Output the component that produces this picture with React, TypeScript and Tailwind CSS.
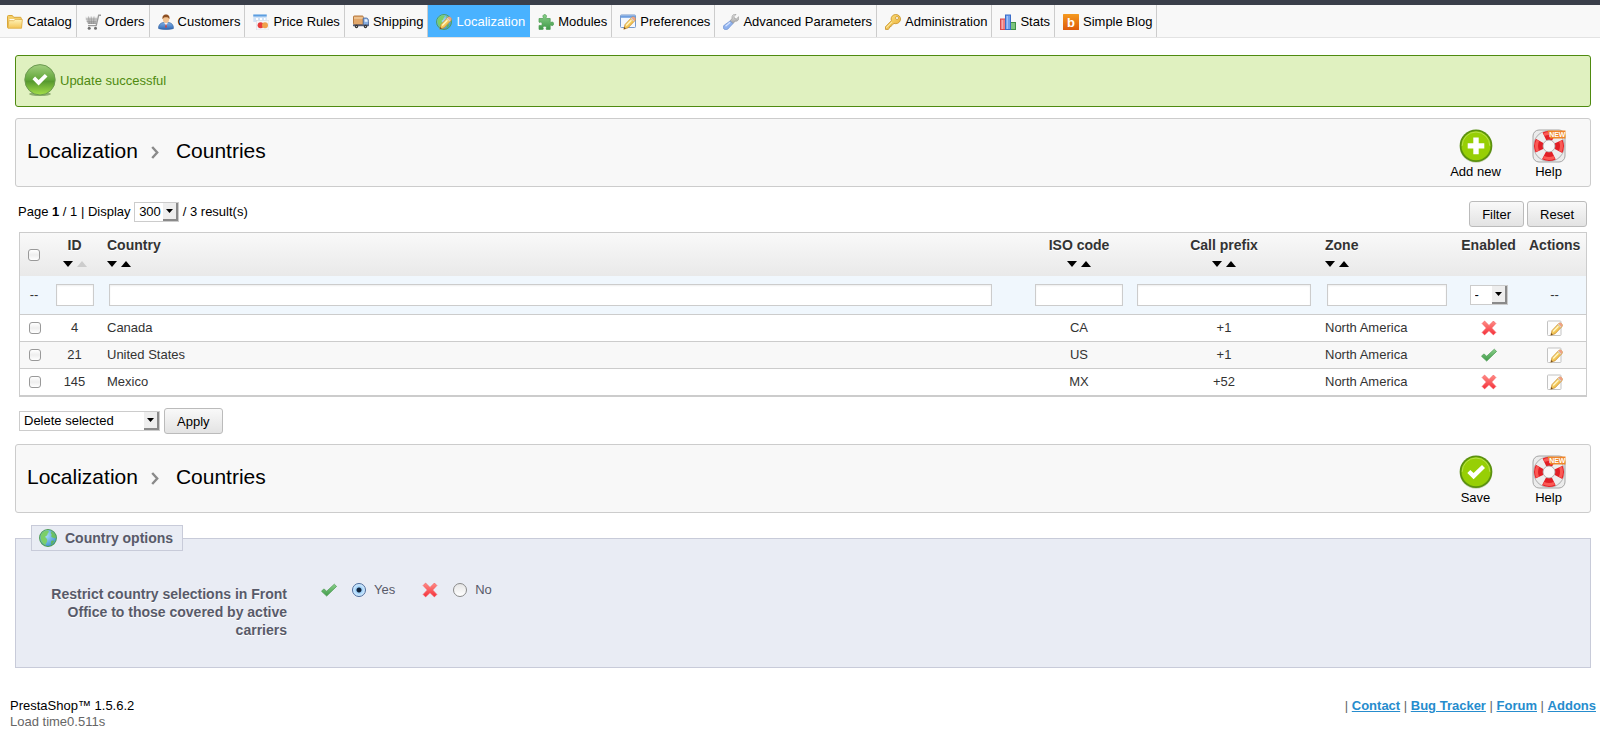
import clsx from 'clsx';
import { ReactNode } from 'react';

const Defs = () => (
  <svg className="absolute h-0 w-0" aria-hidden="true">
    <defs>
      <linearGradient id="folder" x1="0" y1="0" x2="0" y2="1">
        <stop offset="0" stopColor="#fff3b8" />
        <stop offset="1" stopColor="#f3c455" />
      </linearGradient>
      <linearGradient id="steel" x1="0" y1="0" x2="0" y2="1">
        <stop offset="0" stopColor="#f2f2f2" />
        <stop offset="1" stopColor="#9b9b9b" />
      </linearGradient>
      <linearGradient id="coat" x1="0" y1="0" x2="0" y2="1">
        <stop offset="0" stopColor="#7fb0e6" />
        <stop offset="1" stopColor="#2f68b4" />
      </linearGradient>
      <linearGradient id="gold" x1="0" y1="0" x2="1" y2="1">
        <stop offset="0" stopColor="#ffe98a" />
        <stop offset="1" stopColor="#e8a92e" />
      </linearGradient>
      <linearGradient id="leaf" x1="0" y1="0" x2="0" y2="1">
        <stop offset="0" stopColor="#8ad08a" />
        <stop offset="1" stopColor="#3f9a48" />
      </linearGradient>
      <linearGradient id="cherry" x1="0" y1="0" x2="0" y2="1">
        <stop offset="0" stopColor="#ff8d86" />
        <stop offset="1" stopColor="#f5303a" />
      </linearGradient>
      <linearGradient id="orange" x1="0" y1="0" x2="0" y2="1">
        <stop offset="0" stopColor="#f59a1f" />
        <stop offset="1" stopColor="#dd5a0c" />
      </linearGradient>
      <linearGradient id="success" x1="0" y1="0" x2="0" y2="1">
        <stop offset="0" stopColor="#a3d07f" />
        <stop offset="0.5" stopColor="#62a63a" />
        <stop offset="0.55" stopColor="#57992f" />
        <stop offset="1" stopColor="#a6e04a" />
      </linearGradient>
      <radialGradient id="globe" cx="0.4" cy="0.35" r="0.7">
        <stop offset="0" stopColor="#a9dcf5" />
        <stop offset="1" stopColor="#3d8fd0" />
      </radialGradient>
    </defs>
  </svg>
);

const Icon = ({ children }: { children: ReactNode }) => (
  <svg viewBox="0 0 16 16" className="size-4 shrink-0" aria-hidden="true">
    {children}
  </svg>
);

const Pencil = () => (
  <>
    <path d="M3.800 15.200l1.200-4.700 6.400-6.700c1-1 2.200-1 3.200 0s1 2.200 0 3.200l-6.500 6.800z" fill="url(#gold)" stroke="#c98a2b" strokeWidth=".7" />
    <path d="M11.800 3.500c1-.9 2-.8 2.900.1s.9 1.900 0 2.900l-.9.800-2.900-2.900z" fill="#efa184" />
    <path d="M10.700 4.600l2.900 2.900.7-.8-2.900-2.900z" fill="#d5d5d5" />
    <path d="M3.800 15.200l.6-2.100 1.500 1.500z" fill="#6b4a20" />
    <path d="M6.200 11.500l5.200-5.300" stroke="#fff7c6" strokeWidth="1.300" />
  </>
);

const CatalogIcon = () => (
  <Icon>
    <path d="M.5 2.500c0-.6.400-1 1-1h3.800l1.400 1.800h6.600c.6 0 1 .4 1 1v9.200H.5z" fill="#f5cf6a" stroke="#d9a638" />
    <path d="M2.500 5h9.500v3h-9.500z" fill="#fffdf0" />
    <path d="M1 14.300l.8-7.600h5l1.200-1.200h7.400l-.9 8.800z" fill="url(#folder)" stroke="#dfaf45" strokeWidth=".8" />
  </Icon>
);

const OrdersIcon = () => (
  <Icon>
    <path d="M0 2.500h12.500l-1.500 7.500H3z" fill="url(#steel)" />
    <path d="M.7 5h11.500M1.500 7.300h10M3.500 2.500l1 7.500M6.200 2.500l.3 7.500M9 2.500l-.5 7.500" stroke="#8d8d8d" strokeWidth=".6" />
    <path d="M16 1.200h-2.300L11.200 11.600H3" fill="none" stroke="#9a9a9a" strokeWidth="1.400" />
    <circle cx="4.200" cy="14.200" r="1.500" fill="#6f6f6f" />
    <circle cx="10.500" cy="14.200" r="1.500" fill="#6f6f6f" />
  </Icon>
);

const CustomersIcon = () => (
  <Icon>
    <path d="M.6 14.500c-.4-3 1.500-5.600 4.600-6h5.600c3.200.4 5 3 4.600 6-3 1.300-11.800 1.300-14.800 0z" fill="url(#coat)" stroke="#2d5c9c" strokeWidth=".6" />
    <path d="M6 8.500l2 3 2-3z" fill="#fff" />
    <path d="M8 9.300l.9 3.500-.9 1.400-.9-1.400z" fill="#d4433a" />
    <ellipse cx="8" cy="5" rx="3.100" ry="3.900" fill="#f3c493" />
    <path d="M4.600 5.200C4 1.900 5.700.4 8 .4s4 1.500 3.400 4.800C10.600 3.500 9.500 3.200 8 3.200s-2.600.3-3.400 2z" fill="#8d4f22" />
  </Icon>
);

const PriceRulesIcon = () => (
  <Icon>
    <rect x=".3" y=".5" width="13.400" height="7.500" fill="#cfe2f7" />
    <path d="M.3.500h13.400v2H.3z" fill="#5c9ee0" />
    <path d="M3 4h2v2H3zM7 4h2v2H7zM11 4h1.500v2H11z" fill="#fff" />
    <rect x="3.500" y="6.500" width="12.500" height="9.500" fill="#f4f5f8" stroke="#d4d8e0" strokeWidth=".5" />
    <circle cx="7.600" cy="11.300" r="3" fill="#e83b3b" />
    <circle cx="12" cy="11.300" r="3" fill="#f0a04a" />
  </Icon>
);

const ShippingIcon = () => (
  <Icon>
    <rect x=".5" y="2" width="9.700" height="8.500" rx=".8" fill="#e2a76a" stroke="#b47a43" />
    <path d="M1 4h9" stroke="#f6d3a7" strokeWidth="1.200" />
    <path d="M10.300 4h3.200c1.300 0 2 1.500 2 3.500v4h-5.200z" fill="#88aee0" stroke="#46669c" strokeWidth=".8" />
    <path d="M11.600 5.200h2c.7 0 1 1.200 1 2.500h-3z" fill="#e8f3ff" />
    <path d="M0 10.500h15.700v1.700H0z" fill="#4d5872" />
    <circle cx="3.500" cy="12.500" r="1.700" fill="#333" />
    <circle cx="12.500" cy="12.500" r="1.700" fill="#333" />
    <circle cx="3.500" cy="12.500" r=".6" fill="#ccc" />
    <circle cx="12.500" cy="12.500" r=".6" fill="#ccc" />
  </Icon>
);

const Globe = () => (
  <>
    <circle cx="8" cy="8" r="7.500" fill="url(#globe)" stroke="#4d9e50" strokeWidth=".9" />
    <path d="M1.500 6C2.500 3 5 1.300 8 1.200c1.500 1 .5 2.200-.5 3 .5 1.300-1 2-2 2.500 0 1.500 1.500 1.300 1.800 3 .2 1.800-1 2.500-1.500 4.500C3 13.200 1 10 1.500 6z" fill="#7bcf68" />
    <path d="M10.500 2c2.500 1 4.200 3.200 4.400 5.600-.6 1-1.400.7-2.100.2-1 0-1.800-.4-2-1.500.8-1 .6-1.600-.2-2.300z" fill="#6cc35d" />
    <path d="M11 10.500l2.500-.3c-.5 1.800-1.500 3-3 3.900z" fill="#5fb757" />
  </>
);

const LocalizationIcon = () => (
  <Icon>
    <Globe />
    <Pencil />
  </Icon>
);

const ModulesIcon = () => (
  <Icon>
    <path
      d="M1 4.500h4c.5 0 .6-.5.300-1C4.400 2 5.200.6 6.700.6S9 2 8.200 3.500c-.3.500-.2 1 .3 1h3.700V8c0 .5.500.6 1 .3 1.400-.7 2.500.1 2.500 1.500s-1.100 2.300-2.500 1.500c-.5-.3-1-.2-1 .3v3.800H8.600c-.5 0-.7-.5-.4-1 .6-1.300 0-2.200-1.500-2.200s-2.100.9-1.500 2.200c.300.500.100 1-.4 1H1v-3.600c0-.5.500-.7 1-.4 1.300.600 2.100-.1 2.100-1.500S3.300 7.700 2 8.300c-.5.300-1 .1-1-.4z"
      fill="url(#leaf)"
      stroke="#4b9a50"
      strokeWidth=".7"
    />
  </Icon>
);

const PreferencesIcon = () => (
  <Icon>
    <rect x=".5" y="1" width="15" height="12.500" rx=".8" fill="#f4f8fd" stroke="#7699cc" />
    <path d="M1 1.500h14v2.300H1z" fill="#6f9fe0" />
    <Pencil />
  </Icon>
);

const AdvancedIcon = () => (
  <Icon>
    <path d="M7 7.200l2.600 2.600 2.600-2.500c1.800.3 3.300-.9 3.600-3 .1-.7 0-1.100-.1-1.500l-2.300 2.100-2-.5-.4-1.900L13 .4C10.500-.2 8.600 1.600 9 4.400z" fill="url(#steel)" stroke="#888" strokeWidth=".6" />
    <path d="M7.200 6.900l2.700 2.700-5 5.400c-1.100 1-2.900 1-3.900 0s-.9-2.700.2-3.800z" fill="#8fb2ee" stroke="#6c8fd0" strokeWidth=".7" />
    <path d="M2.500 12.200l4.700-4" stroke="#d7e4ff" strokeWidth="1.200" />
  </Icon>
);

const KeyIcon = () => (
  <Icon>
    <path
      d="M10.800.5c2.700 0 4.700 2 4.700 4.500s-2 4.700-4.700 4.700c-.7 0-1.200-.1-1.800-.3L7.500 10.800l-1.200.200-.2 1.500-1.400.2-.2 1.400-1.300 1.300H.5v-2.700l5.900-6C6.200 6.200 6.100 5.600 6.100 5c0-2.500 2-4.500 4.700-4.500z"
      fill="url(#gold)"
      stroke="#c78f23"
      strokeWidth=".8"
    />
    <circle cx="12" cy="4" r="1.500" fill="#fff" stroke="#c78f23" strokeWidth=".7" />
    <path d="M1.500 13.700l5.500-5.600" stroke="#fff6c2" strokeWidth=".8" />
  </Icon>
);

const StatsIcon = () => (
  <Icon>
    <rect x=".5" y="5" width="5" height="10.500" fill="#ee7f82" stroke="#d9484c" />
    <rect x="10.500" y="8.500" width="5" height="7" fill="#7cc47c" stroke="#3f8f46" />
    <rect x="5.500" y="1" width="5" height="14.500" fill="#6fa0ee" stroke="#3a6cc8" />
    <path d="M7.300 2v13" stroke="#a9c8fa" strokeWidth="1.200" />
    <path d="M2.300 6v9" stroke="#f8b6b6" strokeWidth="1" />
  </Icon>
);

const BlogIcon = () => (
  <Icon>
    <rect width="16" height="16" rx=".5" fill="url(#orange)" />
    <text x="8" y="12.500" textAnchor="middle" fontSize="13" fontWeight="bold" fill="#fff">b</text>
  </Icon>
);

const CheckIcon = () => (
  <Icon>
    <path d="M.5 9.300l2.300-2.400 2.900 2.300 7.600-7 2.300 2.200-9.900 9.700z" fill="url(#leaf)" stroke="#4b9a50" strokeWidth=".7" strokeLinejoin="round" />
  </Icon>
);

const CrossIcon = () => (
  <Icon>
    <path d="M3.600 1L8 5.400 12.400 1l2.500 2.500L10.700 8l4.200 4.400-2.500 2.500L8 10.700l-4.400 4.200-2.500-2.500L5.300 8 1.100 3.500z" fill="url(#cherry)" stroke="#f4565a" strokeWidth=".6" strokeLinejoin="round" />
  </Icon>
);

const EditIcon = () => (
  <Icon>
    <rect x=".5" y="1" width="13.500" height="14.500" rx=".8" fill="#fdfdfd" stroke="#c3c3c3" />
    <Pencil />
  </Icon>
);

const GlobeIcon = () => (
  <svg viewBox="0 0 16 16" className="size-[18px]" aria-hidden="true">
    <Globe />
  </svg>
);

const SuccessIcon = () => (
  <svg viewBox="0 0 32 32" className="size-8 shrink-0" aria-hidden="true">
    <ellipse cx="16" cy="30" rx="11" ry="2" fill="#8fae70" />
    <circle cx="16" cy="15.800" r="15.200" fill="url(#success)" stroke="#6d9a52" strokeWidth="1" />
    <path d="M8.500 15.200l2.600-2.600 3.500 3.300 6.200-6 2.700 2.600-8.900 8.900z" fill="#fff" />
  </svg>
);

const RoundIcon = ({ children }: { children: ReactNode }) => (
  <svg viewBox="0 0 34 34" className="size-[34px]" aria-hidden="true">
    <circle cx="17" cy="17.500" r="16.300" fill="#c9d2b8" />
    <circle cx="17" cy="16.800" r="16.300" fill="#5b9110" />
    <circle cx="17" cy="16.800" r="14.500" fill="#97cf05" />
    <path d="M3.200 16.800a13.800 13.800 0 0 1 27.600 0" fill="none" stroke="#b6e04a" />
    {children}
  </svg>
);

const AddIcon = () => (
  <RoundIcon>
    <path d="M14.300 8.500h5.400v5.700h5.600v5.300h-5.600v5.700h-5.400v-5.700H8.700v-5.300h5.600z" fill="#fff" />
  </RoundIcon>
);

const SaveIcon = () => (
  <RoundIcon>
    <path d="M8.300 18l3-3 3.300 3 8.400-8 3 3-11.400 11.300z" fill="#fff" />
  </RoundIcon>
);

const HelpIcon = () => (
  <svg viewBox="0 0 34 34" className="size-[34px]" aria-hidden="true">
    <rect x="1" y="1" width="32" height="32" rx="6" fill="#ececec" stroke="#a6a6a6" />
    <circle cx="17" cy="17" r="15.800" fill="#b5b5b5" />
    <circle cx="17" cy="17" r="10.500" fill="none" stroke="#ededed" strokeWidth="9" />
    <circle cx="17" cy="17" r="10.500" fill="none" stroke="#e21f26" strokeWidth="9" strokeDasharray="10 6.493" strokeDashoffset="5" />
    <circle cx="17" cy="17" r="12.500" fill="none" stroke="#fb5a55" strokeWidth="3" strokeDasharray="11 8.635" strokeDashoffset="5.500" />
    <circle cx="17" cy="17" r="6" fill="#f8f8f8" stroke="#b0a0a0" strokeWidth=".8" />
    <path d="M15.500 1.500h18v8H18z" fill="#f0862a" />
    <text x="25.300" y="8.200" textAnchor="middle" fontSize="7" fontWeight="bold" fill="#fff">NEW</text>
  </svg>
);

const tabs = [
  { name: 'Catalog', icon: <CatalogIcon /> },
  { name: 'Orders', icon: <OrdersIcon /> },
  { name: 'Customers', icon: <CustomersIcon /> },
  { name: 'Price Rules', icon: <PriceRulesIcon /> },
  { name: 'Shipping', icon: <ShippingIcon /> },
  { name: 'Localization', icon: <LocalizationIcon />, active: true },
  { name: 'Modules', icon: <ModulesIcon /> },
  { name: 'Preferences', icon: <PreferencesIcon /> },
  { name: 'Advanced Parameters', icon: <AdvancedIcon /> },
  { name: 'Administration', icon: <KeyIcon /> },
  { name: 'Stats', icon: <StatsIcon /> },
  { name: 'Simple Blog', icon: <BlogIcon /> },
];

const countries = [
  { id: 4, name: 'Canada', iso: 'CA', prefix: '+1', zone: 'North America', enabled: false },
  { id: 21, name: 'United States', iso: 'US', prefix: '+1', zone: 'North America', enabled: true },
  { id: 145, name: 'Mexico', iso: 'MX', prefix: '+52', zone: 'North America', enabled: false },
];

const footerLinks = ['Contact', 'Bug Tracker', 'Forum', 'Addons'];

const Select = ({ label, value, className }: { label: string; value: string; className: string }) => (
  <span className={clsx('relative inline-block h-5 align-middle', className)}>
    <select aria-label={label} className="block h-5 w-full appearance-none border border-[#ccc] bg-white pl-1 text-[13px] leading-4 text-black">
      <option>{value}</option>
    </select>
    <span className="pointer-events-none absolute top-px right-px flex h-[18px] w-[15px] items-center justify-center border-r-2 border-b-2 border-[#8a8a8a] bg-[#eee]">
      <svg viewBox="0 0 7 4" className="h-1 w-[7px]"><path d="M0 0h7L3.500 4z" /></svg>
    </span>
  </span>
);

const Button = ({ children }: { children: ReactNode }) => (
  <button type="button" className="h-[26px] rounded-[3px] border border-[#bbb] bg-linear-to-b from-[#f9f9f9] to-[#e3e3e3] px-3 pt-px text-[13px] leading-4 text-black">
    {children}
  </button>
);

const Checkbox = ({ label }: { label: string }) => (
  <input
    type="checkbox"
    aria-label={label}
    className="block size-3 appearance-none rounded-[3px] border border-[#999] bg-linear-to-b from-white via-[#eee] to-white"
  />
);

const Radio = ({ id, checked }: { id: string; checked?: boolean }) => (
  <input
    type="radio"
    name="restrict"
    id={id}
    defaultChecked={checked}
    className="size-[14px] appearance-none rounded-full border border-[#8a8a8a] bg-linear-to-b from-[#e6e6e6] to-white checked:border-[#4a6a9c] checked:bg-[radial-gradient(circle,#10243c_0_2px,#9fd0f8_3px,#d5edff_6px)]"
  />
);

const TextFilter = ({ label, className }: { label: string; className: string }) => (
  <input type="text" aria-label={label} className={clsx('h-[22px] border border-[#ccc] bg-white px-1 align-middle shadow-[inset_0_1px_2px_#eee]', className)} />
);

const Sort = ({ name, centered, muted }: { name: string; centered?: boolean; muted?: boolean }) => (
  <span className={clsx('mt-[6px] flex h-2 items-center gap-1', centered && 'justify-center')}>
    <a href="#desc" aria-label={`Sort ${name} descending`}>
      <svg viewBox="0 0 10 6" className="block h-[6px] w-[10px]"><path d="M0 0h10L5 6z" /></svg>
    </a>
    <a href="#asc" aria-label={`Sort ${name} ascending`}>
      <svg viewBox="0 0 10 6" className="block h-[6px] w-[10px]"><path d="M0 6h10L5 0z" fill={muted ? '#ccc' : '#000'} /></svg>
    </a>
  </span>
);

const ToolbarLink = ({ label, icon }: { label: string; icon: ReactNode }) => (
  <a href="#action" className="flex w-[73px] flex-col items-center gap-px text-[13px] leading-4 text-black">
    {icon}
    {label}
  </a>
);

const PageHeader = ({ children }: { children: ReactNode }) => (
  <div className="flex items-center justify-between rounded-[3px] border border-[#ccc] bg-[#f8f8f8] pt-[10px] pr-[5px] pb-[6px] pl-[11px]">
    <h2 className="mb-2 flex items-center text-[21px] leading-7 text-black">
      Localization
      <svg viewBox="0 0 8 13" className="mt-1 mr-[17px] ml-[13px] h-[13px] w-2" aria-hidden="true">
        <path d="M1.200 1l5 5.500-5 5.500" fill="none" stroke="#8a8a8a" strokeWidth="2.400" />
      </svg>
      Countries
    </h2>
    <div className="flex">{children}</div>
  </div>
);

const th = 'px-[6px] pt-[3px] align-top text-sm leading-[18px] font-bold';
const td = 'h-[27px] border-b border-[#ccc] px-[6px]';

const CountryTable = () => (
  <table className="w-full table-fixed border-separate border-spacing-0 border border-[#ccc] text-[13px] leading-4 text-[#333]">
    <colgroup>
      <col className="w-7" />
      <col className="w-[53px]" />
      <col />
      <col className="w-[100px]" />
      <col className="w-[190px]" />
      <col className="w-[135px]" />
      <col className="w-[69px]" />
      <col className="w-[63px]" />
    </colgroup>
    <thead>
      <tr className="h-[43px] bg-linear-to-b from-[#f9f9f9] to-[#e9e9e9] [text-shadow:0_1px_0_#fff]">
        <th className="pl-2"><Checkbox label="Select all" /></th>
        <th className={th}>ID<Sort name="ID" centered muted /></th>
        <th className={clsx(th, 'text-left')}>Country<Sort name="country" /></th>
        <th className={clsx(th, 'whitespace-nowrap')}>ISO code<Sort name="ISO code" centered /></th>
        <th className={th}>Call prefix<Sort name="call prefix" centered /></th>
        <th className={clsx(th, 'text-left')}>Zone<Sort name="zone" /></th>
        <th className={clsx(th, 'px-0')}>Enabled</th>
        <th className={clsx(th, 'px-0')}>Actions</th>
      </tr>
      <tr className="h-[39px] bg-[#f0f7fd] text-center">
        <td className="border-b border-[#ccc]">--</td>
        <td className="border-b border-[#ccc]"><TextFilter label="ID" className="w-[38px]" /></td>
        <td className="border-b border-[#ccc] pl-2 text-left"><TextFilter label="Country" className="w-[96%]" /></td>
        <td className="border-b border-[#ccc]"><TextFilter label="ISO code" className="w-[88px]" /></td>
        <td className="border-b border-[#ccc]"><TextFilter label="Call prefix" className="w-[174px]" /></td>
        <td className="border-b border-[#ccc] pl-2 text-left"><TextFilter label="Zone" className="w-[120px]" /></td>
        <td className="border-b border-[#ccc]"><Select label="Enabled" value="-" className="w-[38px]" /></td>
        <td className="border-b border-[#ccc]">--</td>
      </tr>
    </thead>
    <tbody>
      {countries.map((c) => (
        <tr key={c.id} className="text-center even:bg-[#f8f8f8]">
          <td className="h-[27px] border-b border-[#ccc] pl-[9px]"><Checkbox label={`Select ${c.name}`} /></td>
          <td className={td}>{c.id}</td>
          <td className={clsx(td, 'text-left')}>{c.name}</td>
          <td className={td}>{c.iso}</td>
          <td className={td}>{c.prefix}</td>
          <td className={clsx(td, 'text-left')}>{c.zone}</td>
          <td className={td}><span className="flex justify-center">{c.enabled ? <CheckIcon /> : <CrossIcon />}</span></td>
          <td className={td}>
            <a href="#edit" aria-label={`Edit ${c.name}`} className="flex justify-center"><EditIcon /></a>
          </td>
        </tr>
      ))}
    </tbody>
  </table>
);

export default function App() {
  return (
    <div className="bg-white font-['Liberation_Sans',Arial,sans-serif] text-[13px] leading-4 text-black">
      <Defs />
      <nav className="flex border-t-5 border-b border-t-[#3a3f4a] border-b-[#e3e3e3] bg-[#f8f8f8]">
        {tabs.map((tab) => (
          <a
            key={tab.name}
            href="#tab"
            className={clsx(
              'flex h-8 items-center gap-1 border-r pt-px pr-1 pl-2 whitespace-nowrap first:pl-[7px]',
              tab.active ? 'border-[#49b2ff] bg-[#49b2ff] text-white' : 'border-[#ccc]'
            )}
          >
            {tab.icon}
            {tab.name}
          </a>
        ))}
      </nav>

      <main className="pt-[17px] pr-[9px] pl-[15px]">
        <div className="flex items-start gap-1 rounded-[3px] border border-[#4f8a10] bg-[#e0f1c0] px-2 pt-2 pb-[10px] text-[#4f8a10]">
          <SuccessIcon />
          <p className="pt-[9px]">Update successful</p>
        </div>

        <div className="mt-[11px]">
          <PageHeader>
            <ToolbarLink label="Add new" icon={<AddIcon />} />
            <ToolbarLink label="Help" icon={<HelpIcon />} />
          </PageHeader>
        </div>

        <form className="mx-1 mt-[14px]">
          <div className="mb-[5px] flex items-start justify-between">
            <div className="-ml-px pt-px leading-5">
              Page <b>1</b> / 1 | Display <Select label="Display" value="300" className="mb-px w-[45px]" /> / 3 result(s)
            </div>
            <div className="flex gap-[3px]">
              <Button>Filter</Button>
              <Button>Reset</Button>
            </div>
          </div>
          <CountryTable />
          <div className="mt-[11px] flex items-center gap-1">
            <Select label="Bulk action" value="Delete selected" className="w-[141px]" />
            <Button>Apply</Button>
          </div>
        </form>

        <div className="mt-[10px]">
          <PageHeader>
            <ToolbarLink label="Save" icon={<SaveIcon />} />
            <ToolbarLink label="Help" icon={<HelpIcon />} />
          </PageHeader>
        </div>

        <fieldset className="mt-3 border border-[#c8cbd9] bg-[#e9ecf4] px-[15px] pb-7 text-[#585a69]">
          <legend className="flex h-[26px] items-center gap-2 border border-[#c8cbd9] bg-[#e9ecf4] pr-[9px] pl-[7px] text-sm font-bold">
            <GlobeIcon />
            Country options
          </legend>
          <div className="flex items-start gap-[34px] pt-[34px]">
            <p id="restrict-label" className="w-[256px] text-right text-sm leading-[18px] font-bold [text-shadow:0_1px_0_#fff]">
              Restrict country selections in Front Office to those covered by active carriers
            </p>
            <div role="radiogroup" aria-labelledby="restrict-label" className="-mt-[3px] flex gap-[27px]">
              <label htmlFor="restrict-yes" className="flex items-center">
                <CheckIcon />
                <span className="ml-[15px] flex items-center gap-2"><Radio id="restrict-yes" checked />Yes</span>
              </label>
              <label htmlFor="restrict-no" className="flex items-center">
                <CrossIcon />
                <span className="ml-[15px] flex items-center gap-2"><Radio id="restrict-no" />No</span>
              </label>
            </div>
          </div>
        </fieldset>
      </main>

      <footer className="flex justify-between pt-[30px] pr-1 pb-2 pl-[10px]">
        <div>
          <p>PrestaShop™ 1.5.6.2</p>
          <p className="text-[#666]">Load time0.511s</p>
        </div>
        <div className="text-[#666]">
          {footerLinks.map((link) => (
            <span key={link}>
              {' | '}
              <a href="#footer" className="font-bold text-[#268ccd] underline">{link}</a>
            </span>
          ))}
        </div>
      </footer>
    </div>
  );
}
